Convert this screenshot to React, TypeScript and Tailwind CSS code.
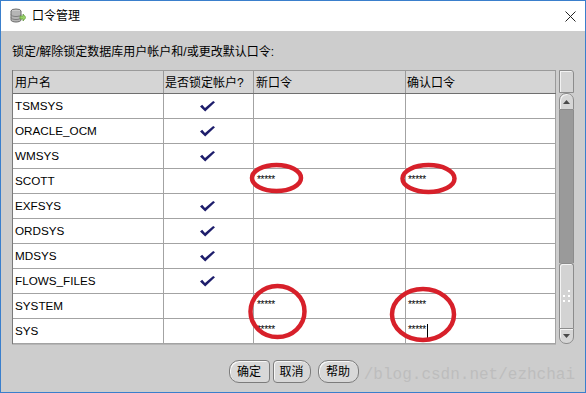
import React from "react";

type User = { name: string; locked: boolean; pwd?: boolean; caret?: boolean };

const USERS: User[] = [
  { name: "TSMSYS", locked: true },
  { name: "ORACLE_OCM", locked: true },
  { name: "WMSYS", locked: true },
  { name: "SCOTT", locked: false, pwd: true },
  { name: "EXFSYS", locked: true },
  { name: "ORDSYS", locked: true },
  { name: "MDSYS", locked: true },
  { name: "FLOWS_FILES", locked: true },
  { name: "SYSTEM", locked: false, pwd: true },
  { name: "SYS", locked: false, pwd: true, caret: true },
];

const CJK = "font-['Liberation_Sans','Noto_Sans_CJK_SC',sans-serif]";

function Check() {
  return (
    <svg width="15" height="11" viewBox="0 0 15 11">
      <polygon points="0,5.5 2.2,3.8 5,7 13.2,0 15,1.2 5.2,10.6" fill="#1d1d6b" />
    </svg>
  );
}

function TitleIcon() {
  return (
    <svg width="16" height="16" viewBox="0 0 16 16">
      <ellipse cx="6" cy="3" rx="5" ry="2" fill="#c9c9c9" stroke="#6b6b6b" />
      <path d="M1 3v9c0 1.1 2.2 2 5 2s5-.9 5-2V3" fill="#b5b5b5" stroke="#6b6b6b" />
      <path d="M1 6.5c0 1.1 2.2 2 5 2s5-.9 5-2M1 9.5c0 1.1 2.2 2 5 2s5-.9 5-2" fill="none" stroke="#7d7d7d" />
      <path d="M10 8h3V6l3 3.5-3 3.5v-2h-3z" fill="#9bd36a" stroke="#4f8a2a" strokeWidth="0.6" />
    </svg>
  );
}

export default function App() {
  return (
    <div className={`relative flex h-[393px] w-[586px] flex-col overflow-hidden border border-[#3a7fcc] bg-[#cdcdcd] ${CJK}`}>
      {/* title bar */}
      <div className="flex h-[30px] items-center bg-white pl-[9px] pr-[9px]">
        <TitleIcon />
        <span className="ml-[6px] text-[12px] leading-none text-black">口令管理</span>
        <svg className="ml-auto" width="11" height="11" viewBox="0 0 11 11">
          <path d="M0.5 0.5l10 10M10.5 0.5l-10 10" stroke="#222" strokeWidth="1" />
        </svg>
      </div>

      <div className="flex flex-col pl-[11px]">
        <div className="mt-[13px] text-[12px] leading-[16px] text-black">
          锁定/解除锁定数据库用户帐户和/或更改默认口令:
        </div>

        <div className="mt-[10px] flex">
          <div className="border-l border-[#7a7a7a]">
            <div className="grid h-[24px] grid-cols-[151px_90px_152px_150px] border-b border-t border-b-[#6f6f6f] border-t-[#9a9a9a] bg-[#d5d5d5] text-[12px] text-black">
              <div className="flex items-center border-r border-[#9a9a9a] pl-[2px] pt-[1px]">用户名</div>
              <div className="flex items-center border-r border-[#9a9a9a] pl-[1px] pt-[1px]">是否锁定帐户?</div>
              <div className="flex items-center border-r border-[#9a9a9a] pl-[2px] pt-[1px]">新口令</div>
              <div className="flex items-center border-r border-[#9a9a9a] pl-[1px] pt-[1px]">确认口令</div>
            </div>
            {USERS.map((u) => (
              <div
                key={u.name}
                className="grid h-[25px] grid-cols-[151px_90px_152px_150px] bg-white text-[11.7px] text-black font-['Liberation_Sans',sans-serif]"
              >
                <div className="flex items-center border-b border-r border-[#a3a3a3] pl-[2px]">{u.name}</div>
                <div className="flex items-center justify-center border-b border-r border-[#a3a3a3] pr-[2px]">
                  {u.locked && <Check />}
                </div>
                <div className="flex items-center border-b border-r border-[#a3a3a3] pb-[4px] pl-[3px] text-[10px] tracking-[-0.3px]">
                  {u.pwd ? "*****" : ""}
                </div>
                <div className="flex items-center border-b border-r border-[#a3a3a3] pb-[4px] pl-[2px] text-[10px] tracking-[-0.3px]">
                  {u.pwd ? "*****" : ""}
                  {u.caret && <span className="mt-[5px] ml-[1px] h-[15px] w-px bg-black" />}
                </div>
              </div>
            ))}
          </div>

          {/* scrollbar */}
          <div className="ml-[3px] flex w-[15px] flex-col">
            <div className="h-[23px] rounded-tr-[3px] border border-[#8c8c8c] bg-[#d3d3d3] shadow-[inset_1px_1px_0_#f2f2f2]" />
            <div className="flex h-[17px] items-center justify-center rounded-t-[7px] border border-[#8c8c8c] bg-[#d6d6d6] shadow-[inset_1px_1px_0_#f4f4f4]">
              <svg width="7" height="4" viewBox="0 0 7 4">
                <path d="M3.5 0L7 4H0z" fill="#4a4a4a" />
              </svg>
            </div>
            <div className="h-[153px] border-x border-[#8c8c8c] bg-[#9a9a9a]" />
            <div className="flex h-[65px] flex-col items-center justify-center rounded-t-[3px] border border-b-0 border-[#8c8c8c] bg-[#d3d3d3] shadow-[inset_1px_1px_0_#f4f4f4]">
              <div className="grid grid-cols-2 gap-x-[3px] gap-y-[3px]">
                <span className="h-[2px] w-[2px] bg-transparent" />
                <span className="h-[2px] w-[2px] bg-white" />
                <span className="h-[2px] w-[2px] bg-white" />
                <span className="h-[2px] w-[2px] bg-white" />
                <span className="h-[2px] w-[2px] bg-white" />
                <span className="h-[2px] w-[2px] bg-white" />
              </div>
            </div>
            <div className="flex h-[16px] items-center justify-center rounded-b-[7px] border border-[#8c8c8c] bg-[#d6d6d6] shadow-[inset_1px_1px_0_#f4f4f4]">
              <svg width="7" height="4" viewBox="0 0 7 4">
                <path d="M0 0h7L3.5 4z" fill="#4a4a4a" />
              </svg>
            </div>
          </div>
        </div>
        <div className="h-px w-[544px] bg-[#b5b5b5]" />
      </div>

      {/* buttons */}
      <div className="relative z-10 mt-[15px] flex justify-center pl-[1px] text-[12px] text-black">
        <button className="h-[23px] w-[41px] rounded-l-[10px] rounded-r-[4px] border border-[#7c7c7c] bg-[#d8d8d8] shadow-[inset_1px_1px_0_#f7f7f7]">
          确定
        </button>
        <button className="ml-[3px] h-[23px] w-[38px] rounded-l-[4px] rounded-r-[10px] border border-[#7c7c7c] bg-[#d8d8d8] shadow-[inset_1px_1px_0_#f7f7f7]">
          取消
        </button>
        <button className="ml-[7px] h-[23px] w-[41px] rounded-[10px] border border-[#7c7c7c] bg-[#d8d8d8] shadow-[inset_1px_1px_0_#f7f7f7]">
          帮助
        </button>
      </div>

      {/* watermark */}
      <div className="pointer-events-none absolute bottom-[9px] right-[10px] text-[16px] leading-none text-[#bdbdbd] font-['Liberation_Mono',monospace]">
        /blog.csdn.net/ezhchai
      </div>

      {/* red hand-drawn marks */}
      <svg className="pointer-events-none absolute left-[-1px] top-[-1px]" width="586" height="393" viewBox="0 0 586 393">
        <g fill="none" stroke="#d7202a" strokeWidth="4.5">
          <ellipse cx="276.5" cy="178" rx="24.5" ry="13" />
          <ellipse cx="428.5" cy="178.5" rx="26" ry="13.5" />
          <ellipse cx="277.5" cy="311.5" rx="27" ry="25.5" />
          <ellipse cx="423" cy="314.5" rx="31" ry="25.5" />
        </g>
      </svg>
    </div>
  );
}
